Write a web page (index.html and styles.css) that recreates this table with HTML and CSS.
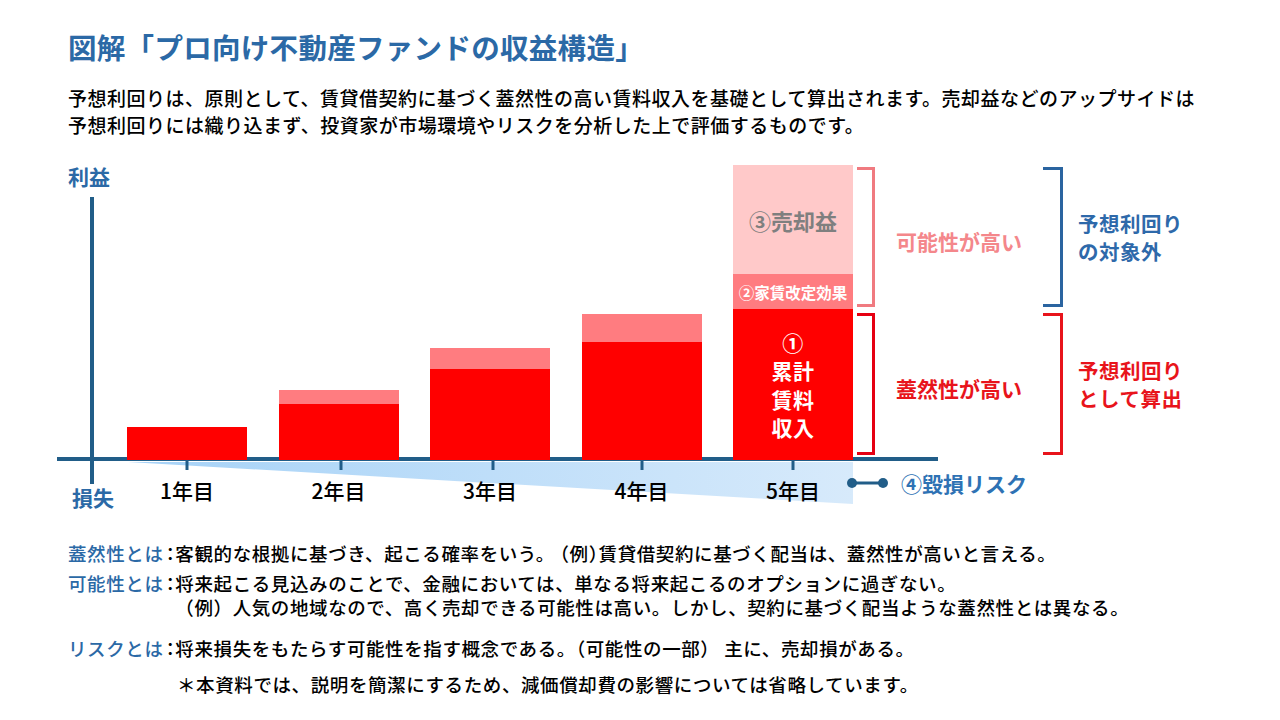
FILE: index.html
```html
<!DOCTYPE html>
<html lang="ja">
<head>
<meta charset="utf-8">
<title>図解「プロ向け不動産ファンドの収益構造」</title>
<link rel="stylesheet" href="styles.css">
</head>
<body>
<main class="slide">
  <h1 class="title">図解「プロ向け不動産ファンドの収益構造」</h1>
  <div class="lead">
    <p class="lead-line">予想利回りは、原則として、賃貸借契約に基づく蓋然性の高い賃料収入を基礎として算出されます。売却益などのアップサイドは</p>
    <p class="lead-line">予想利回りには織り込まず、投資家が市場環境やリスクを分析した上で評価するものです。</p>
  </div>

  <section class="chart">
    <svg class="chart-bg" viewBox="0 160 1280 360" width="1280" height="360" aria-hidden="true">
      <defs>
        <linearGradient id="riskFill" x1="0" y1="0" x2="1" y2="0">
          <stop offset="0" stop-color="#a6d2f7"/>
          <stop offset="1" stop-color="#d7eafb"/>
        </linearGradient>
      </defs>
      <polygon points="128,462 853,462 853,504" fill="url(#riskFill)"/>
      <line x1="92" y1="197" x2="92" y2="484" stroke="#215d88" stroke-width="4"/>
      <line x1="57" y1="459" x2="938" y2="459" stroke="#215d88" stroke-width="4"/>
      <g stroke="#215d88" stroke-width="3">
        <line x1="187" y1="459" x2="187" y2="470"/>
        <line x1="341" y1="459" x2="341" y2="470"/>
        <line x1="493" y1="459" x2="493" y2="470"/>
        <line x1="642" y1="459" x2="642" y2="470"/>
        <line x1="793" y1="459" x2="793" y2="470"/>
      </g>
    </svg>

    <div class="yaxis">
      <span class="ylab">利益</span>
      <span class="ylab loss">損失</span>
    </div>

    <div class="bars">
      <div class="col">
        <div class="stack">
          <div class="seg rent" style="height:33px"></div>
        </div>
        <div class="year">1年目</div>
      </div>
      <div class="col">
        <div class="stack">
          <div class="seg revision" style="height:14px"></div>
          <div class="seg rent" style="height:56px"></div>
        </div>
        <div class="year">2年目</div>
      </div>
      <div class="col">
        <div class="stack">
          <div class="seg revision" style="height:21px"></div>
          <div class="seg rent" style="height:91px"></div>
        </div>
        <div class="year">3年目</div>
      </div>
      <div class="col">
        <div class="stack">
          <div class="seg revision" style="height:28px"></div>
          <div class="seg rent" style="height:118px"></div>
        </div>
        <div class="year">4年目</div>
      </div>
      <div class="col">
        <div class="stack">
          <div class="seg sale" style="height:109px"><span class="sale-label">③売却益</span></div>
          <div class="seg revision" style="height:35px"><span class="rev-label">②家賃改定効果</span></div>
          <div class="seg rent" style="height:151px">
            <span class="rent-label">①</span>
            <span class="rent-label">累計</span>
            <span class="rent-label">賃料</span>
            <span class="rent-label">収入</span>
          </div>
        </div>
        <div class="year">5年目</div>
      </div>
    </div>

    <div class="notes">
      <div class="brk possible"></div>
      <div class="tag center pink">可能性が高い</div>
      <div class="brk out"></div>
      <div class="tag side blue"><span class="line">予想利回り</span><span class="line">の対象外</span></div>

      <div class="brk likely"></div>
      <div class="tag center red">蓋然性が高い</div>
      <div class="brk in"></div>
      <div class="tag side red"><span class="line">予想利回り</span><span class="line">として算出</span></div>

      <div class="risk">
        <svg class="connector" viewBox="0 0 43 12" width="43" height="12" aria-hidden="true">
          <line x1="6" y1="6" x2="37" y2="6" stroke="#215d88" stroke-width="3"/>
          <circle cx="6" cy="6" r="5" fill="#215d88"/>
          <circle cx="37" cy="6" r="5" fill="#215d88"/>
        </svg>
        <span>④毀損リスク</span>
      </div>
    </div>
  </section>

  <div class="defs">
    <div class="def">
      <span class="term">蓋然性とは</span><span class="colon">：</span>
      <p class="desc">客観的な根拠に基づき、起こる確率をいう。 <span class="example">（例）</span>賃貸借契約に基づく配当は、蓋然性が高いと言える。</p>
    </div>
    <div class="def">
      <span class="term">可能性とは</span><span class="colon">：</span>
      <div class="desc">
        <p class="desc-line">将来起こる見込みのことで、金融においては、単なる将来起こるのオプションに過ぎない。</p>
        <p class="desc-line">（例）人気の地域なので、高く売却できる可能性は高い。しかし、契約に基づく配当ような蓋然性とは異なる。</p>
      </div>
    </div>
    <div class="def">
      <span class="term">リスクとは</span><span class="colon">：</span>
      <p class="desc">将来損失をもたらす可能性を指す概念である。（可能性の一部） 主に、売却損がある。</p>
    </div>
    <p class="foot">＊本資料では、説明を簡潔にするため、減価償却費の影響については省略しています。</p>
  </div>
</main>
</body>
</html>
```

FILE: styles.css
```css
* { box-sizing: border-box; }

html, body {
  margin: 0;
  padding: 0;
  background: #ffffff;
}

body {
  width: 1280px;
  height: 720px;
  overflow: hidden;
  font-family: "Noto Sans CJK JP", "Noto Sans", "Liberation Sans", sans-serif;
  color: #000000;
}

.slide {
  padding-top: 29px;
}

.line {
  display: block;
}

.title {
  margin: 0;
  padding-left: 68px;
  font-size: 28.5px;
  line-height: 36px;
  font-weight: 700;
  color: #2b69a6;
  letter-spacing: 0.3px;
}

.lead {
  margin-top: 19px;
  padding-left: 68px;
  font-size: 19px;
  letter-spacing: 0.5px;
  line-height: 27px;
  font-weight: 500;
}

.lead-line {
  margin: 0;
}

/* ---------- chart ---------- */
.chart {
  position: relative;
  display: flex;
  height: 360px;
  margin-top: 22px;
}

.chart-bg {
  position: absolute;
  left: 0;
  top: 0;
}

.yaxis, .bars, .notes {
  position: relative;
}

.yaxis {
  width: 127px;
  padding: 4px 0 11px 68px;
  display: flex;
  flex-direction: column;
  justify-content: space-between;
}

.ylab {
  font-size: 21px;
  line-height: 24px;
  font-weight: 700;
  color: #2b69a6;
}

.ylab.loss { padding-left: 4px; }

.bars {
  display: flex;
  align-items: flex-end;
  gap: 31.5px;
  padding-bottom: 19px;
}

.col {
  width: 120px;
  display: flex;
  flex-direction: column;
}

.stack {
  display: flex;
  flex-direction: column;
}

.seg {
  display: flex;
  flex-direction: column;
  align-items: center;
  justify-content: center;
}

.seg.rent { background: #ff0000; }
.seg.revision { background: #ff7c80; }
.seg.sale { background: #ffc9c9; }

.sale-label {
  font-size: 22px;
  line-height: 28px;
  font-weight: 700;
  color: #7f7f7f;
}

.rev-label {
  font-size: 15.5px;
  line-height: 20px;
  font-weight: 700;
  color: #ffffff;
}

.rent-label {
  font-size: 21px;
  line-height: 28.5px;
  font-weight: 700;
  color: #ffffff;
  letter-spacing: 0.5px;
}

.year {
  margin-top: 19px;
  text-align: center;
  font-size: 21px;
  line-height: 22px;
  font-weight: 500;
}

/* ---------- annotations ---------- */
.notes {
  margin: 7px 0 0 4px;
  display: grid;
  grid-template-columns: 18px 168px 20px auto;
  grid-template-rows: 140px 142px auto;
  row-gap: 6px;
  align-content: start;
}

.brk {
  border: 3px solid;
  border-left: 0;
}

.brk.possible { border-color: #f07a80; }
.brk.likely { border-color: #e60012; }
.brk.out { border-color: #2a64a0; }
.brk.in { border-color: #e8141b; }

.tag {
  align-self: center;
  font-size: 21px;
  line-height: 27px;
  font-weight: 700;
}

.tag.center {
  text-align: center;
  padding-top: 8px;
}

.tag.side {
  padding-left: 15px;
  font-size: 20.5px;
  letter-spacing: 0.5px;
  line-height: 28px;
}

.pink { color: #f4878b; }
.red { color: #e8141b; }
.blue { color: #2e69aa; }

.risk {
  grid-column: 1 / -1;
  margin: 10px 0 0 -11px;
  display: flex;
  align-items: center;
  gap: 12px;
  font-size: 21px;
  line-height: 24px;
  font-weight: 700;
  color: #2e72b4;
}

/* ---------- definitions ---------- */
.defs {
  margin-top: 21px;
  padding-left: 68px;
  font-size: 18.5px;
  letter-spacing: 0.6px;
  line-height: 24px;
  font-weight: 500;
}

.def {
  display: flex;
  margin-bottom: 6px;
}

.def:nth-child(2) { margin-bottom: 17px; }

.term {
  flex: none;
  width: 97.5px;
  color: #2b69a6;
}

.colon {
  flex: none;
  font-feature-settings: "halt";
}

.desc {
  margin: 0;
}

.desc-line {
  margin: 0;
}

.example {
  font-feature-settings: "halt";
}

.foot {
  margin: 12px 0 0;
  padding-left: 109px;
}
```
